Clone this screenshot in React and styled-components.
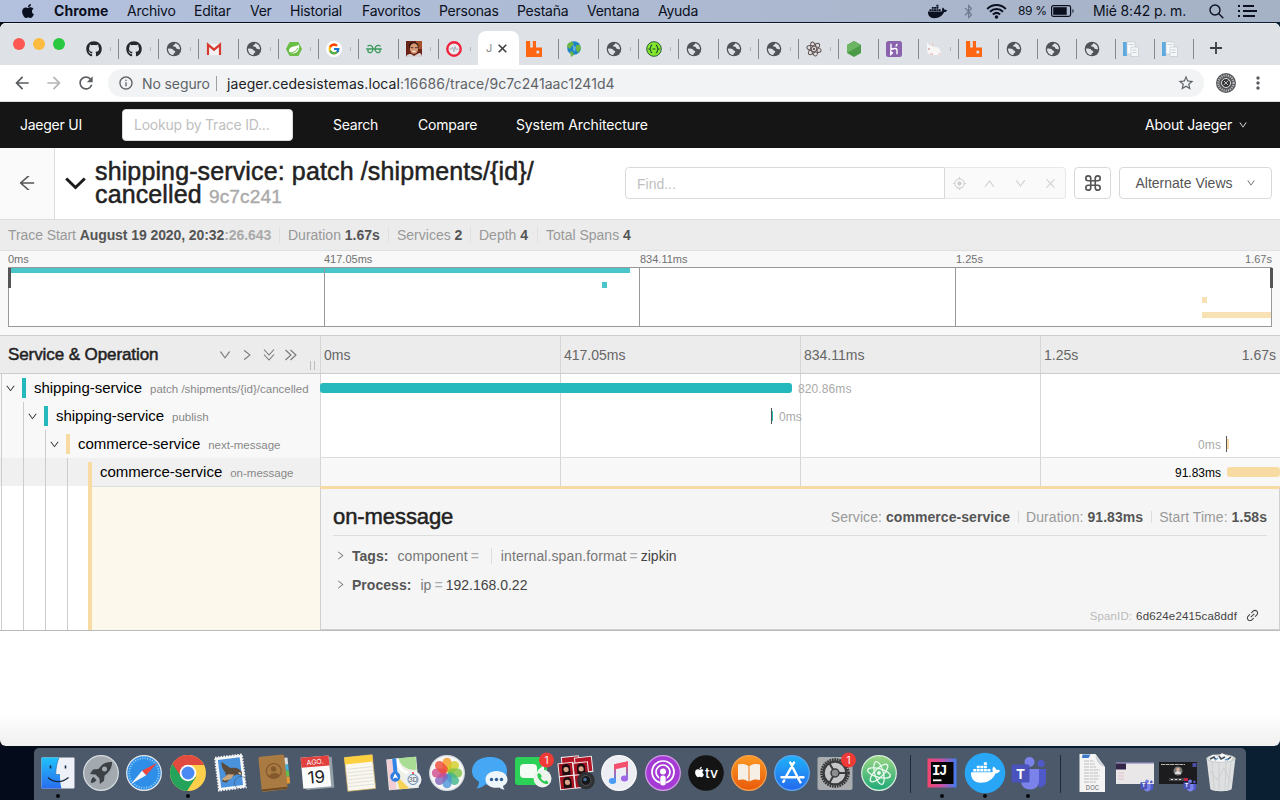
import React from "react";
import styled, { createGlobalStyle } from "styled-components";
import { FaApple, FaDocker, FaGithub, FaBluetoothB } from "react-icons/fa";
import { FcGoogle } from "react-icons/fc";
import {
  AiOutlineArrowLeft,
  AiOutlineDown,
  AiOutlineUp,
  AiOutlineClose,
  AiOutlineRight,
  AiOutlineLink,
} from "react-icons/ai";
import { MdArrowBack, MdArrowForward, MdRefresh, MdInfoOutline, MdStarBorder, MdMoreVert } from "react-icons/md";

const sf = `Inter, "Liberation Sans", sans-serif`;
const helv = `"Liberation Sans", Arial, sans-serif`;
const TEAL = "#25b9be";
const SAND = "#f7dba3";

const Global = createGlobalStyle`
  * { box-sizing: border-box; }
  body { margin: 0; overflow: hidden; background: #06121f; }
  svg { display: block; flex: none; }
`;

const Screen = styled.div`
  width: 1280px;
  height: 800px;
  display: flex;
  flex-direction: column;
  overflow: hidden;
  background: linear-gradient(90deg, #040b1a, #0a2032);
  font-family: ${helv};
`;

/* ---------- system menu bar ---------- */
const MenuBar = styled.header`
  height: 22px;
  margin-bottom: 1px;
  flex: none;
  display: flex;
  align-items: center;
  background: linear-gradient(90deg, #b3c1df, #adbad2 50%, #a5b2c5);
  color: #0a1020;
  font: 400 14px/22px ${sf};
`;
const AppleSlot = styled.div`
  width: 54px;
  padding-left: 20px;
`;
const MenuItem = styled.span`
  width: ${(p) => p.$w}px;
  flex: none;
  white-space: nowrap;
  font-weight: ${(p) => (p.$bold ? 700 : 400)};
  letter-spacing: ${(p) => (p.$bold ? 0.05 : -0.25)}px;
`;
const MenuStatus = styled.div`
  margin-left: auto;
  width: 352px;
  display: flex;
  align-items: center;
`;
const Slot = styled.div`
  width: ${(p) => p.$w}px;
  flex: none;
  display: flex;
  align-items: center;
  white-space: nowrap;
  font-size: ${(p) => p.$fs || 14}px;
  letter-spacing: ${(p) => p.$ls || 0}px;
  opacity: ${(p) => p.$o || 1};
`;

/* ---------- browser window ---------- */
const Window = styled.div`
  height: 723px;
  flex: none;
  display: flex;
  flex-direction: column;
  border-radius: 6px;
  overflow: hidden;
  background: linear-gradient(#fff 0 690px, #f0f0f0 723px);
`;
const TabStrip = styled.div`
  height: 42px;
  flex: none;
  display: flex;
  align-items: flex-end;
  background: #dee1e6;
  border-top: 1px solid #e9ebee;
`;
const Lights = styled.div`
  width: 79px;
  height: 34px;
  padding: 7px 0 0 13px;
  display: flex;
  gap: 8px;
`;
const Light = styled.i`
  width: 12px;
  height: 12px;
  border-radius: 50%;
  background: ${(p) => p.$c};
`;
const Tab = styled.div`
  width: ${(p) => p.$w || 40}px;
  height: 34px;
  flex: none;
  display: flex;
  align-items: center;
  padding-left: 7px;
  padding-top: 1px;
`;
const Sliver = styled.i`
  width: 1px;
  height: 4px;
  margin-left: 8px;
  background: #b3b6bb;
`;
const TabEnd = styled.i`
  width: 1px;
  height: 20px;
  margin-left: auto;
  background: ${(p) => (p.$hide ? "transparent" : "#85888c")};
`;
const ActiveTab = styled.div`
  width: 41px;
  height: 34px;
  flex: none;
  display: flex;
  align-items: center;
  gap: 6px;
  padding: 0 0 0 8px;
  background: #fff;
  border-radius: 8px 8px 0 0;
  color: #8a8a8a;
  font: 11px ${sf};
`;
const Plus = styled.div`
  height: 34px;
  display: flex;
  align-items: center;
  padding-left: 16px;
`;
const Toolbar = styled.div`
  height: 37px;
  flex: none;
  display: flex;
  align-items: center;
  background: #fff;
  border-bottom: 1px solid #d9dcdf;
  color: #5a5d61;
  padding-left: 12px;
`;
const Omnibox = styled.div`
  width: 1096px;
  height: 28px;
  display: flex;
  align-items: center;
  border-radius: 14px;
  background: #f1f3f4;
  padding: 0 9px 0 10px;
  font: 14px ${sf};
  color: #5f6368;
`;
const Insecure = styled.span`
  width: 75px;
  margin-left: 8px;
  border-right: 1px solid #9aa0a6;
  line-height: 15px;
  letter-spacing: -0.1px;
`;
const Url = styled.span`
  margin-left: 10px;
  letter-spacing: 0.08px;
  b {
    font-weight: 400;
    color: #202124;
  }
`;
const Push = styled.div`
  margin-left: auto;
`;
const Avatar = styled.div`
  margin: 0 12px;
`;

/* ---------- Jaeger navigation ---------- */
const Nav = styled.nav`
  height: 46px;
  flex: none;
  display: flex;
  align-items: center;
  background: #151515;
  color: #fff;
  font: 14px ${sf};
  padding-left: 20px;
  padding-bottom: 1px;
`;
const NavItem = styled.span`
  width: ${(p) => p.$w}px;
  white-space: nowrap;
  letter-spacing: ${(p) => p.$ls || 0}px;
`;
const Lookup = styled.div`
  width: 171px;
  height: 32px;
  margin-right: 40px;
  padding-left: 11px;
  border: 1px solid #d9d9d9;
  border-radius: 4px;
  background: #fff;
  color: #bfbfbf;
  line-height: 30px;
  letter-spacing: -0.22px;
`;
const About = styled.span`
  margin-left: auto;
  width: 135px;
  display: flex;
  align-items: center;
  gap: 6px;
  letter-spacing: -0.2px;
`;

/* ---------- trace header ---------- */
const TraceHead = styled.section`
  height: 71px;
  flex: none;
  display: flex;
  align-items: center;
  padding-bottom: 1px;
  background: #fff;
`;
const Back = styled.div`
  width: 55px;
  height: 71px;
  display: flex;
  align-items: center;
  justify-content: center;
  background: #fafafa;
  border-right: 1px solid #ddd;
  color: #555;
`;
const BigChevron = styled.div`
  width: 40px;
  padding-left: 10px;
`;
const Title = styled.h1`
  width: 530px;
  margin: 0;
  padding-bottom: 1px;
  font: 400 25px/23px ${helv};
  letter-spacing: 0.13px;
  color: #222;
  -webkit-text-stroke: 0.5px #222;
  small {
    font-size: 19px;
    letter-spacing: 0.2px;
    line-height: 19px;
    font-weight: 400;
    color: #aaa;
    -webkit-text-stroke: 0.4px #aaa;
  }
`;
const Find = styled.div`
  width: 320px;
  height: 32px;
  padding-left: 11px;
  border: 1px solid #d9d9d9;
  border-radius: 4px 0 0 4px;
  color: #bfbfbf;
  font: 14px/32px ${helv};
`;
const FindTools = styled.div`
  width: 121px;
  height: 32px;
  margin-right: 8px;
  padding: 0 8px;
  display: flex;
  align-items: center;
  justify-content: space-between;
  border: 1px solid #e8e8e8;
  border-left: 0;
  border-radius: 0 4px 4px 0;
  background: #fafafa;
  color: #cfcfcf;
`;
const Button = styled.div`
  width: ${(p) => p.$w}px;
  height: 32px;
  margin-right: 8px;
  display: flex;
  align-items: center;
  justify-content: center;
  gap: 13px;
  border: 1px solid #d9d9d9;
  border-radius: 4px;
  color: #555;
  font: 14px ${helv};
  white-space: nowrap;
`;
const Summary = styled.section`
  height: 32px;
  flex: none;
  display: flex;
  align-items: center;
  padding-left: 8px;
  background: #ececec;
  border-top: 1px solid #ddd;
  border-bottom: 1px solid #e0e0e0;
  font: 14px ${helv};
  color: #999;
  b {
    color: #555;
  }
  b i {
    font-style: normal;
    color: #aaa;
  }
`;
const SummaryItem = styled.span`
  width: ${(p) => p.$w}px;
  margin-right: 8px;
  white-space: nowrap;
  letter-spacing: ${(p) => p.$ls || 0}px;
  border-right: ${(p) => (p.$last ? 0 : "1px solid #e0e0e0")};
`;

/* ---------- minimap ---------- */
const MiniMap = styled.section`
  height: 85px;
  flex: none;
  background: #f8f8f8;
  border-bottom: 1px solid #ccc;
`;
const MiniTicks = styled.div`
  height: 16px;
  display: flex;
  padding: 0 8px;
  font: 11px/16px ${helv};
  color: #717171;
  span {
    width: 316px;
    flex: none;
  }
  span:nth-last-child(2) {
    flex: 1;
  }
  span:last-child {
    width: auto;
  }
`;

/* ---------- timeline ---------- */
const Row = styled.div`
  display: flex;
  flex: none;
  height: ${(p) => p.$h || 28}px;
`;
const HeadRow = styled(Row)`
  background: #ececec;
  border-bottom: 1px solid #ccc;
`;
const HeadName = styled.div`
  width: 320px;
  padding-left: 8px;
  display: flex;
  align-items: center;
  color: #222;
  font: 400 17px ${helv};
  -webkit-text-stroke: 0.5px #222;
  letter-spacing: -0.09px;
`;
const HeadTools = styled.div`
  margin-left: auto;
  display: flex;
  align-items: center;
  gap: 8px;
  color: #777;
`;
const Grip = styled.i`
  width: 5px;
  height: 9px;
  margin: 22px 5px 0 12px;
  border: solid #bbb;
  border-width: 0 1px;
`;
const Track = styled.div`
  width: 960px;
  display: flex;
  align-items: center;
  justify-content: ${(p) => (p.$end ? "flex-end" : "flex-start")};
  background: linear-gradient(90deg, #d6d6d6 1px, transparent 1px) 0 0 / 240px 100% ${(p) => p.$bg || "#fff"};
  box-shadow: ${(p) => (p.$line ? "0 -1px #ddd" : "none")};
`;
const Tick = styled.span`
  flex: 1;
  padding-left: 4px;
  display: flex;
  justify-content: space-between;
  padding-right: 4px;
  font: 14px ${helv};
  color: #666;
`;
const NameCol = styled.div`
  width: 320px;
  display: flex;
  background: ${(p) => p.$bg || "#f8f8f8"};
`;
const Guide = styled.span`
  width: 22px;
  flex: none;
  display: flex;
  align-items: center;
  padding-left: 5px;
  color: #333;
  background: linear-gradient(90deg, transparent 1px, #ccc 1px 2px, transparent 2px);
`;
const Stripe = styled.i`
  width: 4px;
  flex: none;
  margin: ${(p) => p.$m || "4px 8px 4px 0"};
  background: ${(p) => p.$c};
`;
const Service = styled.span`
  font: 15px/28px ${helv};
  letter-spacing: -0.02px;
  color: #000;
  white-space: nowrap;
`;
const Operation = styled.span`
  margin-left: 8px;
  font: 11.5px/30px ${helv};
  color: #888;
  white-space: nowrap;
`;
const Bar = styled.i`
  width: ${(p) => p.$w}px;
  height: 10px;
  border-radius: ${(p) => (p.$w > 10 ? 3 : 0)}px;
  background: ${(p) => p.$c};
`;
const Mark = styled.i`
  width: 1px;
  height: 16px;
  margin-left: ${(p) => p.$x || 0}px;
  background: #555;
`;
const Time = styled.span`
  margin: 1px ${(p) => p.$r || 0}px 0 6px;
  font: 12px ${helv};
  letter-spacing: ${(p) => (p.$dark ? 0 : 0.1)}px;
  color: ${(p) => (p.$dark ? "#000" : "#aaa")};
`;
const DetailGap = styled.div`
  flex: 1;
  background: #fdf8ec;
  border-top: 1px solid #ddd;
`;
const Detail = styled.div`
  width: 960px;
  height: 144px;
  padding: 0 12px;
  border: 1px solid #d0d0d0;
  border-top: 3px solid ${SAND};
  background: #f5f5f5;
`;
const DetailHead = styled.div`
  height: 47px;
  display: flex;
  align-items: center;
  justify-content: space-between;
  padding-top: 10px;
  border-bottom: 1px solid #ddd;
  h2 {
    margin: 0;
    font: 400 22px ${helv};
    color: #222;
    -webkit-text-stroke: 0.5px #222;
    letter-spacing: -0.08px;
  }
`;
const Facts = styled.div`
  display: flex;
  font: 14px/16px ${helv};
  letter-spacing: 0.07px;
  color: #999;
  b {
    color: #555;
  }
  span + span {
    margin-left: 8px;
    padding-left: 8px;
    background: linear-gradient(#ddd, #ddd) 0 2px / 1px 12px no-repeat;
  }
`;
const Accordion = styled.div`
  height: 29px;
  padding-left: 2px;
  display: flex;
  align-items: center;
  font: 14px ${helv};
  color: #777;
  b {
    margin: 0 9px 0 6px;
    color: #555;
    letter-spacing: 0.03px;
  }
  em {
    font-style: normal;
    color: #444;
  }
  q {
    quotes: none;
    margin: 0 3px;
    color: #aaa;
  }
`;
const TagKey = styled.span`
  letter-spacing: 0.1px;
`;
const Divider = styled.i`
  width: 1px;
  height: 16px;
  margin: 0 9px 0 9px;
  background: #ddd;
`;
const Accordions = styled.div`
  padding-top: 5px;
  height: 70px;
`;
const SpanId = styled.div`
  display: flex;
  align-items: center;
  justify-content: flex-end;
  padding: 2px 7px 0 0;
  font: 11.5px/14px ${helv};
  letter-spacing: 0.1px;
  color: #bbb;
  b {
    margin: 0 8px 0 4px;
    font-weight: 400;
    letter-spacing: 0.15px;
    color: #444;
  }
`;
const TableEnd = styled.div`
  height: 1px;
  flex: none;
  background: #bbb;
`;

/* ---------- dock ---------- */
const Dock = styled.footer`
  width: 1212px;
  height: 52px;
  margin: 2px 0 0 34px;
  padding-left: 2.4px;
  display: flex;
  background: #4c596a;
  border-radius: 5px 5px 0 0;
`;
const DockSlot = styled.div`
  width: 43.2px;
  height: 52px;
  flex: none;
  display: flex;
  flex-direction: column;
  align-items: center;
  padding-top: 4.5px;
  svg {
    overflow: visible;
  }
`;
const Dot = styled.i`
  width: 4px;
  height: 4px;
  margin-top: 1.5px;
  border-radius: 50%;
  background: #080a0e;
`;
const DockRule = styled.i`
  width: 1px;
  height: 38px;
  margin: 7px 9px 0 10.3px;
  background: #1d2b3b;
`;

/* ---------- favicons ---------- */
const Ico = ({ children, s = 16, v = 16 }) => (
  <svg width={s} height={s} viewBox={`0 0 ${v} ${v}`} fill="none">
    {children}
  </svg>
);
const Globe = () => (
  <Ico>
    <circle cx="8" cy="8" r="7.3" fill="#505357" />
    <path d="M9.2 2.3C12 2.8 14 5.3 14 8.2c-1 .3-2.6.2-3.5-.6-.6-.5-.3-1.4-1-1.700-.9-.3-2 .1-2.400-.8-.3-.8 1-1 1.500-1.500.3-.4.2-.9.6-1.300z" fill="#dee1e6" />
    <path d="M2 7.700c1.500-.3 3.300-.3 4.500.4.9.5.5 1.200 1.300 1.500.9.3 1.600.6 1.500 1.400-.1.9-1.400.9-1.700 1.700-.2.5 0 .9-.2 1.300C4.300 13.900 2 11.200 2 7.700z" fill="#dee1e6" />
  </Ico>
);
const Gmail = () => (
  <Ico>
    <path d="M1.5 3h13v11h-13z" fill="#f2f2f2" />
    <path d="M2 14V3.7l6 5 6-5V14" stroke="#d63b31" strokeWidth="2.2" />
  </Ico>
);
const Spring = () => (
  <Ico>
    <path d="M.5 8 3.8 1.5h8.4L15.5 8l-3.3 6.5H3.8z" fill="#6abd45" stroke="#6abd45" strokeLinejoin="round" />
    <path d="M13 3.5C11 6 3.500 4.500 3 9.500c0 3 4 3.500 6.500 2.500C13 10.300 13.600 6.500 13 3.500z" fill="#fff" />
    <path d="M4 12c4-.5 6.500-2 8-5" stroke="#6abd45" />
  </Ico>
);
const GoogleTab = () => (
  <Ico>
    <circle cx="8" cy="8" r="8" fill="#fff" />
    <FcGoogle x="1.5" y="1.5" size="13" />
  </Ico>
);
const Geeks = () => (
  <Ico>
    <path d="M1.500 5.200C3.500 3.600 7 4.500 7 8s-3.200 4.500-5 2.700V8.200M.2 8H15.800M14.500 5.200C12.500 3.600 9 4.500 9 8s3.200 4.500 5 2.700V8.200" stroke="#3a9a5c" strokeWidth="1.300" />
  </Ico>
);
const Face = () => (
  <Ico>
    <path d="M0 0h16v16H0z" fill="#6b2418" />
    <path d="M10 0h6v8h-6z" fill="#a5502a" />
    <path d="M3 5C3 0 12.500 0 12.500 5v4l-9-1z" fill="#2a1510" />
    <ellipse cx="8" cy="7.500" rx="4.200" ry="5.200" fill="#d79a75" />
    <path d="M4.500 6.700h3M9 6.700h3" stroke="#54342a" />
    <path d="M0 16c1-3 3-3 5-3l3 2 5-3c2 0 3 2 3 4z" fill="#d9d5d6" />
    <path d="m6.500 10.200 3 .2" stroke="#fff" />
  </Ico>
);
const Jenkins = () => (
  <Ico>
    <circle cx="8" cy="8" r="6.700" fill="#e9ebef" stroke="#f0233c" strokeWidth="2.400" />
    <path d="M3.500 8h2l1-2 1.300 4.500 1.200-5 1.300 3.500.8-1h1.500" stroke="#aab2bc" />
  </Ico>
);
const Rabbit = () => (
  <Ico>
    <path d="M0 0h4.200v6.500h2.600V0H10v6.500h6V16H0zM10.500 9.800V12.500h2.700V9.800z" fill="#ff6612" fillRule="evenodd" />
  </Ico>
);
const Earth = () => (
  <Ico>
    <circle cx="8" cy="7" r="6.800" fill="#1c84c6" />
    <path d="M1 6C1 2 4 1 6 .8L8 3 6 5 4 8zM10 4l4 0 1 4-3 4-2-3zM4 10l3 1 1 3-3 2z" fill="#6bb544" />
    <path d="M7 4l3 2-1 5-2-2z" fill="#a8dcee" opacity=".5" />
  </Ico>
);
const Swagger = () => (
  <Ico>
    <circle cx="8" cy="8" r="7.300" fill="#85ea2d" stroke="#2a5a3a" strokeWidth="1" />
    <path d="M6.200 4.200C3.800 4.200 5.500 7.400 3.500 8c2 .6.300 3.800 2.700 3.800M9.800 4.200c2.400 0 .7 3.200 2.700 3.800-2 .6-.3 3.800-2.700 3.800M6.500 8h3" stroke="#24492c" strokeWidth="1.200" />
  </Ico>
);
const AtomMark = ({ c = "#5c4c49" }) => (
  <g stroke={c} fill="none">
    <ellipse cx="8" cy="8" rx="7.300" ry="2.700" transform="rotate(15 8 8)" />
    <ellipse cx="8" cy="8" rx="7.300" ry="2.700" transform="rotate(75 8 8)" />
    <ellipse cx="8" cy="8" rx="7.300" ry="2.700" transform="rotate(135 8 8)" />
    <circle cx="8" cy="8" r=".8" fill={c} />
  </g>
);
const Atom = () => (
  <Ico>
    <AtomMark />
  </Ico>
);
const Node = () => (
  <Ico>
    <path d="M8 0 15 4v8l-7 4-7-4V4z" fill="#4a9a47" />
    <path d="M8 0 15 4 1 12V4z" fill="#6cb562" />
  </Ico>
);
const Heroku = () => (
  <Ico>
    <rect width="16" height="16" rx="2.500" fill="#8a62ad" />
    <path d="M5 2.800v5.700c3-1.400 6-1.500 6 .5v4.200M11 2.800c0 1.200-.6 2-1.300 2.600M4.800 10.500v3l1.600-1.500z" stroke="#fff" strokeWidth="1.400" />
  </Ico>
);
const Bunny = () => (
  <Ico>
    <path d="M1 1l3 4 3.500-3-.5 4c5-1 8 2 8 8H5L1.500 12 1 7z" fill="#f8f6f5" />
    <path d="M6 5l1.200-2.500M4 13h3M12.500 13h2" stroke="#e6a99e" />
    <circle cx="3" cy="8" r=".7" fill="#a55" />
  </Ico>
);
const Papers = () => (
  <Ico>
    <path d="M0 1h4v14H0z" fill="#5ea9dd" />
    <path d="M4 1h8v12H4z" fill="#f9fafb" stroke="#c4cacf" strokeWidth=".7" />
    <path d="M8 6h7.500v9.500H8z" fill="#f5f6f7" stroke="#c4cacf" strokeWidth=".7" />
    <path d="M5.500 3.500h5M9.500 9h4M9.500 11.500h4" stroke="#c8cfd6" />
  </Ico>
);

/* [icon, shows the edge of a clipped title] */
const leftTabs = [
  [<FaGithub size={16} color="#24292e" />, 1],
  [<FaGithub size={16} color="#24292e" />, 1],
  [<Globe />, 1],
  [<Gmail />],
  [<Globe />, 1],
  [<Spring />, 1],
  [<GoogleTab />, 1],
  [<Geeks />],
  [<Face />, 1],
  [<Jenkins />, 1],
];
/* [icon, width, clipped title] */
const rightTabs = [
  [<Rabbit />, 40], [<Earth />, 40], [<Globe />, 40, 1], [<Swagger />, 40, 1], [<Globe />, 40], [<Globe />, 40, 1],
  [<Globe />, 40, 1], [<Atom />, 40, 1], [<Node />, 40], [<Heroku />, 40], [<Bunny />, 40, 1], [<Rabbit />, 40],
  [<Globe />, 39], [<Globe />, 39], [<Globe />, 39], [<Papers />, 39], [<Papers />, 39],
];

/* ---------- dock drawings ---------- */
const D = ({ children }) => (
  <svg width="38" height="40" viewBox="0 0 38 40" fill="none">
    {children}
  </svg>
);
const Disc = ({ fill, stroke = "#d8dde2" }) => (
  <circle cx="19" cy="20" r="17.300" fill={fill} stroke={stroke} strokeWidth="1.200" />
);
const Badge = () => (
  <g>
    <circle cx="32.500" cy="7" r="7.500" fill="#f03a36" />
    <text x="32.500" y="10.600" fontSize="10" fill="#fff" textAnchor="middle" fontFamily="Inter">1</text>
  </g>
);
const Finder = () => (
  <D>
    <rect x="2.500" y="4.500" width="33" height="31" rx="1" fill="#eef2f8" />
    <path d="M2.500 4.500H20c-2 5-3.200 11-3.300 17H21c0 5 .3 9.500 1.500 14h-20z" fill="url(#fnd)" />
    <path d="M11.500 12.500v3M26.500 12.500v3" stroke="#16283c" strokeWidth="1.600" />
    <path d="M9 24.500c6 5.500 14 5.500 20.500 0" stroke="#16283c" strokeWidth="1.300" />
    <path d="M20 4.500c-2 5-3.200 11-3.300 17H21" stroke="#2467a8" strokeWidth=".6" />
    <defs>
      <linearGradient id="fnd" x2="0" y2="1"><stop stopColor="#1fc2fa" /><stop offset="1" stopColor="#2a6df0" /></linearGradient>
    </defs>
  </D>
);
const Launchpad = () => (
  <D>
    <Disc fill="#a2a9af" />
    <path d="M30 9c-6-.5-10 2-13.500 7l-5.500.6-3 4.400 5.500.4 4 4 .3 5.600 4.200-3.200.6-5.300C27.500 19 30 15 30 9z" fill="#3c4146" />
    <path d="M11.500 24c-2 1-2.500 3.500-2.800 6 2.500-.3 4.800-1 5.800-3z" fill="#3c4146" />
    <circle cx="22.500" cy="16" r="2.500" fill="#a2a9af" />
  </D>
);
const Safari = () => (
  <D>
    <Disc fill="#2f8fe8" stroke="#e6eaee" />
    <circle cx="19" cy="20" r="14.800" stroke="#8fd0f8" strokeWidth="1.800" strokeDasharray="1 1.500" />
    <path d="M32 10 21.200 22.200 17 17.800z" fill="#f2443a" />
    <path d="M6 31 17 17.800l4.200 4.400z" fill="#f4f4f4" />
  </D>
);
const Chrome = () => (
  <D>
    <circle cx="19" cy="20" r="18" fill="#fcd04b" />
    <path d="M19 20 3.400 11A18 18 0 0 0 18 38l9-14z" fill="#24a45b" />
    <path d="M3.400 11A18 18 0 0 1 35 12H19l-8 10z" fill="#e04a3f" />
    <circle cx="19" cy="20" r="8.300" fill="#fff" />
    <circle cx="19" cy="20" r="6.500" fill="#4a8af4" />
  </D>
);
const Mail = () => (
  <D>
    <g transform="rotate(-7 19 20)">
      <rect x="5" y="3" width="27" height="33" fill="#f5f6f7" stroke="#f5f6f7" strokeWidth="2" strokeDasharray="1.600 1.200" />
      <rect x="7.500" y="5.500" width="22" height="28" fill="#4a92dc" />
      <path d="M11 8c2 2 5 4 8 7 5 0 9 1 11 6l-1 3-4-2-6 2-6 5-4-2 5-5-1-4c-2-3-3-6-2-10z" fill="#5a4a3c" />
      <path d="M9 25l7-4 6 1-4 4-6 1z" fill="#c9a77c" />
      <path d="M26 20l3 1-1 2z" fill="#f1e5c0" />
    </g>
    <circle cx="29" cy="30" r="6.500" stroke="#34465e" strokeWidth="1" opacity=".5" />
  </D>
);
const Contacts = () => (
  <D>
    <g transform="rotate(-6 19 20)">
      <path d="M29 6h5v7h-5z" fill="#d8dde0" /><path d="M29 13h5v6h-5z" fill="#44b1d8" />
      <path d="M29 19h5v6h-5z" fill="#62c04b" /><path d="M29 25h5v7h-5z" fill="#e79a34" />
      <rect x="5" y="2.500" width="26" height="35" rx="2" fill="#a97a42" />
      <path d="M5 36h26" stroke="#6d4a22" strokeWidth="2" />
      <circle cx="19" cy="18" r="7.500" stroke="#84592c" strokeWidth="1.200" />
      <circle cx="19" cy="16" r="2.800" fill="#84592c" />
      <path d="M13.500 23c1-4 10-4 11 0a7.500 7.500 0 0 1-11 0z" fill="#84592c" />
    </g>
  </D>
);
const Calendar = () => (
  <D>
    <g transform="rotate(-5 19 20)">
      <rect x="7" y="5" width="28" height="31" fill="#94a0a8" />
      <rect x="4" y="3.500" width="28" height="31" fill="#fbfbfb" />
      <rect x="4" y="3.500" width="28" height="10" fill="#e2403d" />
      <text x="18" y="11.300" fontSize="7" fill="#fff" textAnchor="middle" fontFamily="Inter">AGO.</text>
      <text x="18" y="30" fontSize="17" fill="#222" textAnchor="middle" fontFamily="Inter">19</text>
    </g>
  </D>
);
const Notes = () => (
  <D>
    <g transform="rotate(-6 19 20)">
      <rect x="5" y="3" width="28" height="34" fill="#f9f7ee" stroke="#c9a75b" strokeWidth=".7" />
      <rect x="5" y="3" width="28" height="7" fill="#fdd03f" />
      <path d="M5 15h28M5 18.500h28M5 22h28M5 25.500h28M5 29h28M5 32.500h28" stroke="#dcdcd8" strokeWidth=".8" />
    </g>
  </D>
);
const Maps = () => (
  <D>
    <g transform="rotate(-5 19 20)">
      <rect x="3.500" y="5" width="30" height="31" fill="#eef0e6" />
      <path d="M4 6h7v30H4z" fill="#f2c4cf" opacity=".8" />
      <path d="M16 5h17v13c-9 0-16-5-17-13z" fill="#a9dc94" />
      <path d="M14 5c1 14 9 17 19 17" stroke="#fff" strokeWidth="3" />
      <path d="M12 22l12 14H14z" fill="#f7d259" />
      <path d="M11.500 5v19" stroke="#2f86e8" strokeWidth="4" />
      <circle cx="11" cy="23" r="5" fill="#2f7de0" />
      <path d="m11 19.500 2.800 5.500L11 23.800 8.200 25z" fill="#fff" />
    </g>
    <circle cx="29" cy="26.500" r="8.500" fill="#eef1f3" />
    <circle cx="29" cy="26.500" r="5" stroke="#5f8cac" />
    <text x="29" y="29" fontSize="6.500" fill="#456" textAnchor="middle" fontFamily="Inter">3D</text>
    <circle cx="29" cy="20" r="1" fill="#e33" />
  </D>
);
const petals = ["#f79a1e", "#cfce26", "#7fc241", "#3fb58a", "#4a94d8", "#8565bd", "#d04a8c", "#ee4a38"];
const Photos = () => (
  <D>
    <Disc fill="#f7f7f5" />
    {petals.map((c, i) => (
      <rect key={c} x="14.500" y="4.800" width="9" height="14.500" rx="4.500" fill={c} opacity=".8" transform={`rotate(${i * 45} 19 20)`} />
    ))}
  </D>
);
const Messages = () => (
  <D>
    <path d="M19 4C9 4 1 9.500 1 18c0 5 3 8.500 7 10.500 0 3-1 5-2.500 7 4-.5 7-2 8.500-4 12 2 22-3 22-13.500C36 9.500 29 4 19 4z" fill="#46a8f5" />
    <path d="M25.500 18c-6 0-11 3.500-11 8.500 0 6 6.500 9.500 14 8 1.500 1.500 3.500 2 5 2-1-1.200-1.500-2.300-1.500-3.500 3-1.500 4.500-3.600 4.500-6.500 0-5-5-8.500-11-8.500z" fill="#eef5fb" />
    <circle cx="20.500" cy="26.500" r="1.700" fill="#2d5f96" /><circle cx="25.500" cy="26.500" r="1.700" fill="#2d5f96" /><circle cx="30.500" cy="26.500" r="1.700" fill="#2d5f96" />
  </D>
);
const Facetime = () => (
  <D>
    <rect x="1" y="4" width="32" height="28" rx="3" fill="#2bd257" />
    <rect x="6" y="11" width="17" height="14" rx="4" fill="#f4fbf5" />
    <path d="m24 17 6-5v12l-6-4z" fill="#f4fbf5" />
    <circle cx="28.500" cy="25.500" r="9" fill="#eef3ee" />
    <path d="M24 20.500c-1.500 1.500 0 5 2.500 7.500s6 4 7.500 2.500c1-1-.5-2.500-2-3l-1.500 1c-1.500-.7-3-2-3.700-3.700l1-1.500c-.5-1.800-2.500-4-3.800-2.800z" fill="#2bc950" />
    <Badge />
  </D>
);
const PhotoBooth = () => (
  <D>
    <g transform="rotate(-6 19 20)">
      {[[6, 3], [19, 5]].map(([x, y]) => <rect key={x} x={x} y={y} width="17" height="15" fill="#b51524" stroke="#eee" />)}
      {[[2, 9], [17, 10], [2, 22], [17, 22]].map(([x, y]) => (
        <g key={x + "-" + y}>
          <rect x={x} y={y} width="14.500" height="13" fill="#a81322" stroke="#eee" />
          <path d={`M${x + 3.5} ${y + 12}V${y + 5}a4 4 0 0 1 8 0v7z`} fill="#1c0c10" />
          <circle cx={x + 7.5} cy={y + 6.5} r="2.600" fill="#dba58b" />
        </g>
      ))}
    </g>
    <circle cx="29" cy="27.500" r="8.800" fill="#2f3134" />
    <circle cx="29" cy="27.500" r="5" fill="#15171b" stroke="#555" />
    <circle cx="28" cy="26.500" r="1.800" fill="#4b6ea0" />
  </D>
);
const Music = () => (
  <D>
    <Disc fill="#eceef3" stroke="#fafafa" />
    <path d="M15 28V12l12-2.500V25" stroke="url(#mus)" strokeWidth="2" /><path d="M14 11.500 28 8.500v5L14 16.500z" fill="#f4506e" />
    <ellipse cx="12.500" cy="28" rx="3.600" ry="3" fill="#4a9cf5" /><ellipse cx="24.500" cy="25.500" rx="3.600" ry="3" fill="#a066e8" />
    <defs><linearGradient id="mus" x2="0" y2="1"><stop stopColor="#f4506e" /><stop offset="1" stopColor="#5a86f2" /></linearGradient></defs>
  </D>
);
const Podcasts = () => (
  <D>
    <Disc fill="#a53bd4" stroke="#d39be8" />
    <circle cx="19" cy="19" r="11" stroke="#fff" strokeWidth="1.700" /><circle cx="19" cy="19" r="7" stroke="#fff" strokeWidth="1.700" />
    <path d="M14.500 21h9l-2 11h-5z" fill="#a53bd4" />
    <circle cx="19" cy="18.500" r="3" fill="#fff" /><rect x="16.300" y="22.500" width="5.400" height="10" rx="2.500" fill="#fff" />
  </D>
);
const AppleTv = () => (
  <D>
    <circle cx="19" cy="20" r="17.800" fill="#141415" />
    <FaApple x="6.500" y="13" size="12" color="#fff" />
    <text x="18" y="24.500" fontSize="14" fontWeight="500" fill="#fff" fontFamily="Inter">tv</text>
  </D>
);
const Books = () => (
  <D>
    <Disc fill="url(#bks)" stroke="#f6a24c" />
    <path d="M18.500 13c-3-2.500-7.500-2.500-10.500-1.500v15.500c3-1 7.500-1 10.500 1.500zM19.500 13c3-2.500 7.500-2.500 10.500-1.500v15.500c-3-1-7.500-1-10.500 1.500z" fill="#f6efe6" />
    <defs><linearGradient id="bks" x2="0" y2="1"><stop stopColor="#fb9a24" /><stop offset="1" stopColor="#e9590c" /></linearGradient></defs>
  </D>
);
const AppStore = () => (
  <D>
    <Disc fill="url(#aps)" stroke="#5aa6f0" />
    <path d="M17.200 9.500 26 27M21 9.500 12.500 24.500M8.500 24.300h14M27 24.300h3.500M11.200 27.500l-.9 1.300M26.800 28.300l.6 1" stroke="#fff" strokeWidth="2.400" strokeLinecap="round" />
    <defs><linearGradient id="aps" x2="0" y2="1"><stop stopColor="#1fb2f8" /><stop offset="1" stopColor="#2469ee" /></linearGradient></defs>
  </D>
);
const Prefs = () => (
  <D>
    <rect x="1.500" y="4" width="35" height="33" rx="2" fill="#a9adaf" />
    <circle cx="19" cy="20" r="13.500" fill="#c4c6c7" stroke="#333" strokeWidth="2.500" strokeDasharray="1.700 .8" />
    <circle cx="19" cy="20" r="11.500" stroke="#3a3b3c" strokeWidth="2.500" />
    <circle cx="19" cy="20" r="4" fill="#8c8f90" stroke="#3a3b3c" strokeWidth="1.500" />
    <path d="M23 20h8M17 16.500l-4-7M17 23.500l-4 7" stroke="#3a3b3c" strokeWidth="2" />
    <Badge />
  </D>
);
const AtomApp = () => (
  <D>
    <Disc fill="url(#atm)" stroke="#d5efdc" />
    <g transform="translate(6.200 7.200) scale(1.600)" strokeWidth=".8"><AtomMark c="#eafaf0" /></g>
    <defs><linearGradient id="atm" x2="0" y2="1"><stop stopColor="#9bd683" /><stop offset="1" stopColor="#1fa978" /></linearGradient></defs>
  </D>
);
const IntelliJ = () => (
  <D>
    <rect x="4.500" y="5.500" width="29" height="29" fill="url(#ij)" />
    <rect x="8" y="9" width="22.500" height="22" fill="#050505" />
    <text x="9" y="21.500" fontSize="14" fontWeight="700" fill="#fff" fontFamily="Liberation Mono" letterSpacing="-1.300">IJ</text>
    <path d="M10 27.300h8.500" stroke="#fff" strokeWidth="1.800" />
    <defs><linearGradient id="ij"><stop stopColor="#f2456d" /><stop offset=".45" stopColor="#cf4ea0" /><stop offset="1" stopColor="#3d7df2" /></linearGradient></defs>
  </D>
);
const DockerApp = () => (
  <D>
    <circle cx="19" cy="20" r="20.300" fill="#2aa6f7" />
    <FaDocker x="5" y="5" size="29" color="#fff" />
  </D>
);
const TeamsMark = () => (
  <g>
    <circle cx="32" cy="10.500" r="3.500" fill="#5059c9" /><path d="M26 16h11v11c0 5-3 7.500-7 7.500z" fill="#5059c9" />
    <circle cx="20.500" cy="9" r="5" fill="#7b83eb" /><path d="M12 16h18v12c0 5-4 8.500-9 8.500S12 33 12 28z" fill="#7b83eb" />
    <rect x="2.500" y="11.500" width="18" height="18" rx="1.500" fill="#4a52bb" />
    <text x="11.500" y="25.500" fontSize="13.500" fontWeight="700" fill="#fff" textAnchor="middle" fontFamily="Inter">T</text>
  </g>
);
const Teams = () => (
  <D>
    <TeamsMark />
  </D>
);
const Doc = () => (
  <D>
    <path d="M6.500 1h16l9.500 13v25H6.500z" fill="#f4f4f4" />
    <path d="M22.500 1c.5 6 1 10 9.500 13z" fill="#cfd4d8" />
    <path d="M9.500 1.500h8l-2 3.500H9z" fill="#3c78c8" />
    <path d="M11 8h10M11 11h11M11 14h12M11 17h16M11 20h14M11 23h16M11 26h15M11 29h12" stroke="#b4b6b8" strokeWidth=".9" strokeDasharray="5 .8 3 .6" />
    <text x="19.500" y="37" fontSize="6" fill="#666" textAnchor="middle" fontFamily="Inter">DOC</text>
  </D>
);
const PreviewLight = () => (
  <D>
    <rect x="0" y="9" width="38" height="22" fill="#e9e7e8" />
    <path d="M0 9h38v1.500H0z" fill="#7c7aa8" /><path d="M0 10.500h10v6H0z" fill="#34264a" />
    <path d="M2 20h6M2 23h6M2 26h6" stroke="#e3b9c5" strokeWidth=".8" />
    <g transform="translate(23.500 25) scale(.37)"><TeamsMark /></g>
  </D>
);
const PreviewDark = () => (
  <D>
    <rect x="0" y="9" width="38" height="22" fill="#1c1b1d" />
    <path d="M2 11.500h24" stroke="#ccc" strokeWidth=".9" strokeDasharray="4 .6" /><path d="M33.500 10h4v4h-4z" fill="#4b4fa5" />
    <circle cx="19" cy="18" r="4.500" fill="#7f7d7b" /><circle cx="19" cy="16.500" r="1.700" fill="#e0b39a" /><path d="M16 21c0-4 6-4 6 0z" fill="#ddd" />
    <path d="M10 26.500h18" stroke="#49484b" strokeWidth="3" /><path d="M25 26.500h4" stroke="#c2254b" strokeWidth="3" /><path d="M12 26.500h2M16 26.500h2M20 26.500h2" stroke="#ddd" />
    <g transform="translate(23.500 25) scale(.37)"><TeamsMark /></g>
  </D>
);
const Trash = () => (
  <D>
    <path d="M4.500 5h29l-3.800 31c-2 3-19.400 3-21.400 0z" fill="#dddfe0" />
    <path d="M10 9l2 27M17 10v27M24 10l-1 27M29 9l-3 27M8 18l7 9 7-12 7 14" stroke="#c8cbcd" strokeWidth=".8" />
    <ellipse cx="19" cy="5.500" rx="14.500" ry="4.300" fill="#c9cccd" />
    <path d="M6 5.500l5-4 5 2 4-3.500 5 3 6 1-2 3.500-9 1.500-10-1z" fill="#f7f7f7" />
    <path d="m8 6 4-2 2 3M17 3l2 3 4-2M25 7l4-3" stroke="#3f4d58" strokeWidth="1.500" /><path d="m13 7 3-2M23 7l3-1" stroke="#5a9bd0" strokeWidth="1.500" />
  </D>
);

const dockApps = [
  [Finder, 1], [Launchpad], [Safari], [Chrome, 1], [Mail], [Contacts], [Calendar], [Notes], [Maps], [Photos],
  [Messages], [Facetime], [PhotoBooth], [Music], [Podcasts], [AppleTv], [Books], [AppStore], [Prefs], [AtomApp],
];
const dockRunning = [[IntelliJ, 1], [DockerApp, 1], [Teams, 1]];
const dockFiles = [[Doc], [PreviewLight], [PreviewDark], [Trash]];
const renderDock = (list) =>
  list.map(([Icon, on], i) => (
    <DockSlot key={i}>
      <Icon />
      {on && <Dot />}
    </DockSlot>
  ));

const menus = [
  ["Archivo", 67], ["Editar", 56], ["Ver", 40], ["Historial", 72], ["Favoritos", 77],
  ["Personas", 78], ["Pestaña", 70], ["Ventana", 71], ["Ayuda", 50],
];

const SpanName = ({ depth, color, service, operation, leaf, bg }) => (
  <NameCol $bg={bg}>
    {Array.from({ length: depth }, (_, i) => (
      <Guide key={i}>{i === depth - 1 && !leaf && <AiOutlineDown size={11} />}</Guide>
    ))}
    <Stripe $c={color} $m={leaf ? "4px 8px 0 0" : undefined} />
    <Service>{service}</Service>
    <Operation>{operation}</Operation>
  </NameCol>
);

export default function App() {
  return (
    <Screen>
      <Global />
      <MenuBar>
        <AppleSlot><FaApple size={16} /></AppleSlot>
        <MenuItem $w={73} $bold>Chrome</MenuItem>
        {menus.map(([t, w]) => <MenuItem key={t} $w={w}>{t}</MenuItem>)}
        <MenuStatus>
          <Slot $w={33}><FaDocker size={19} /></Slot>
          <Slot $w={25} $o={0.35}><FaBluetoothB size={15} /></Slot>
          <Slot $w={32}>
            <svg width="21" height="16" viewBox="0 0 21 16" fill="none" stroke="#0a1020" strokeWidth="2">
              <path d="M1.200 6C6.300.7 14.700.7 19.800 6M4 8.800c3.700-3.700 9.300-3.700 13 0M6.900 11.500c2.200-2 5-2 7.200 0" />
              <circle cx="10.500" cy="14" r=".8" fill="#0a1020" />
            </svg>
          </Slot>
          <Slot $w={33} $fs={12} $ls={-0.3}>89 %</Slot>
          <Slot $w={42}>
            <svg width="23" height="12" viewBox="0 0 23 12" fill="none">
              <rect x=".6" y=".6" width="19" height="10.800" rx="1.800" stroke="#0a1020" strokeWidth="1.200" />
              <path d="M2.200 2.200h13.500v7.600H2.200z" fill="#0a1020" />
              <path d="M21.500 4v4c.8-.4 1-1 1-2s-.2-1.600-1-2z" fill="#0a1020" />
            </svg>
          </Slot>
          <Slot $w={116} $ls={-0.15}>Mié 8:42 p. m.</Slot>
          <Slot $w={29}>
            <svg width="15" height="15" viewBox="0 0 15 15" fill="none" stroke="#0a1020" strokeWidth="1.400">
              <circle cx="6" cy="6" r="5" /><path d="m9.600 9.600 4.700 4.700" />
            </svg>
          </Slot>
          <Slot $w={20}>
            <svg width="19" height="12" viewBox="0 0 19 12" stroke="#0a1020" strokeWidth="1.800">
              <path d="M0 1h2M0 6h2M0 11h2M5 1h11M5 6h14M5 11h12" />
            </svg>
          </Slot>
        </MenuStatus>
      </MenuBar>

      <Window>
        <TabStrip>
          <Lights><Light $c="#fc5753" /><Light $c="#fdbc40" /><Light $c="#28c840" /></Lights>
          {leftTabs.map(([icon, clipped], i) => (
            <Tab key={i} $w={i === 9 ? 39 : 40}>{icon}{clipped && <Sliver />}<TabEnd $hide={i === 9} /></Tab>
          ))}
          <ActiveTab>
            J
            <svg width="9" height="9" viewBox="0 0 9 9" stroke="#3c4043" strokeWidth="1.600"><path d="m.7.7 7.600 7.600M8.300.7.7 8.300" /></svg>
          </ActiveTab>
          {rightTabs.map(([icon, w, clipped], i) => (
            <Tab key={i} $w={w}>{icon}{clipped && <Sliver />}<TabEnd /></Tab>
          ))}
          <Plus>
            <svg width="12" height="12" viewBox="0 0 12 12" stroke="#3c4043" strokeWidth="1.800"><path d="M6 0v12M0 6h12" /></svg>
          </Plus>
        </TabStrip>
        <Toolbar>
          <Slot $w={32}><MdArrowBack size={20} /></Slot>
          <Slot $w={32} $o={0.45}><MdArrowForward size={20} /></Slot>
          <Slot $w={32}><MdRefresh size={20} /></Slot>
          <Omnibox>
            <MdInfoOutline size={16} />
            <Insecure>No seguro</Insecure>
            <Url><b>jaeger.cedesistemas.local</b>:16686/trace/9c7c241aac1241d4</Url>
            <Push><MdStarBorder size={18} /></Push>
          </Omnibox>
          <Avatar>
            <svg width="20" height="20" viewBox="0 0 20 20" fill="none">
              <circle cx="10" cy="10" r="10" fill="#55575a" />
              <circle cx="10" cy="10" r="7.600" stroke="#b9babb" strokeWidth="2.200" strokeDasharray="1.200 1" />
              <circle cx="10" cy="10" r="4.500" fill="#303234" stroke="#ddd" />
              <path d="m7.500 12 5-4.500M8 8l4 4" stroke="#ccc" />
            </svg>
          </Avatar>
          <MdMoreVert size={20} />
        </Toolbar>

        <Nav>
          <NavItem $w={102} $ls={-0.25}>Jaeger UI</NavItem>
          <Lookup>Lookup by Trace ID...</Lookup>
          <NavItem $w={85} $ls={-0.25}>Search</NavItem>
          <NavItem $w={98} $ls={-0.2}>Compare</NavItem>
          <NavItem $w={140} $ls={-0.12}>System Architecture</NavItem>
          <About>About Jaeger <AiOutlineDown size={10} /></About>
        </Nav>

        <TraceHead>
          <Back><AiOutlineArrowLeft size={20} /></Back>
          <BigChevron>
            <svg width="21" height="13" viewBox="0 0 21 13" fill="none" stroke="#1c1c1c" strokeWidth="3"><path d="m1.200 1.500 9.300 9 9.300-9" /></svg>
          </BigChevron>
          <Title>
            shipping-service: patch /shipments/{"{id}"}/<br />cancelled <small>9c7c241</small>
          </Title>
          <Find>Find...</Find>
          <FindTools>
            <svg width="13" height="13" viewBox="0 0 12 12" fill="none" stroke="#cfcfcf">
              <circle cx="6" cy="6" r="4.300" /><circle cx="6" cy="6" r="1.500" fill="#cfcfcf" /><path d="M6 0v1.500M6 10.500v1.500M0 6h1.500M10.500 6h1.500" />
            </svg>
            <AiOutlineUp size={13} /><AiOutlineDown size={13} /><AiOutlineClose size={13} />
          </FindTools>
          <Button $w={37}>
            <svg width="18" height="18" viewBox="0 0 24 24" fill="none" stroke="#555" strokeWidth="2.200">
              <path d="M9 9h6v6H9zM9 9V5.500A3.300 3.300 0 1 0 5.500 9zM15 9h3.500A3.300 3.300 0 1 0 15 5.500zM9 15H5.500A3.300 3.300 0 1 0 9 18.500zM15 15v3.500a3.300 3.300 0 1 0 3.500-3.500z" />
            </svg>
          </Button>
          <Button $w={153}>Alternate Views <AiOutlineDown size={10} /></Button>
        </TraceHead>

        <Summary>
          <SummaryItem $w={272} $ls={-0.08}>Trace Start <b>August 19 2020, 20:32<i>:26.643</i></b></SummaryItem>
          <SummaryItem $w={101}>Duration <b>1.67s</b></SummaryItem>
          <SummaryItem $w={74}>Services <b>2</b></SummaryItem>
          <SummaryItem $w={59}>Depth <b>4</b></SummaryItem>
          <SummaryItem $w={100} $last>Total Spans <b>4</b></SummaryItem>
        </Summary>

        <MiniMap>
          <MiniTicks><span>0ms</span><span>417.05ms</span><span>834.11ms</span><span>1.25s</span><span>1.67s</span></MiniTicks>
          <svg width="1280" height="61" viewBox="0 0 1280 61" fill="none" shapeRendering="crispEdges">
            <rect x="8.500" y=".5" width="1263" height="59" fill="#fff" stroke="#999" />
            <path d="M9 1h621v5H9zM602 15h5v6h-5z" fill="#4ac6cb" />
            <path d="M1202 30h5v6h-5zM1202 45h69v6h-69z" fill="#f7e1b5" />
            <path d="M324.500 1v58M639.500 1v58M955.500 1v58" stroke="#999" />
            <path d="M9 1v20M1271 1v20" stroke="#555" strokeWidth="3" />
          </svg>
        </MiniMap>

        <HeadRow $h={38}>
          <HeadName>
            Service &amp; Operation
            <HeadTools>
              <AiOutlineDown size={14} />
              <AiOutlineRight size={14} />
              <svg width="14" height="14" viewBox="0 0 14 14" fill="none" stroke="currentColor" strokeWidth="1.100"><path d="m2 1.500 5 5.500 5-5.500M2 6.500 7 12l5-5.500" /></svg>
              <svg width="14" height="14" viewBox="0 0 14 14" fill="none" stroke="currentColor" strokeWidth="1.100"><path d="M1.500 2 7 7l-5.500 5M6.500 2 12 7l-5.500 5" /></svg>
            </HeadTools>
            <Grip />
          </HeadName>
          <Track $bg="#ececec">
            <Tick>0ms</Tick><Tick>417.05ms</Tick><Tick>834.11ms</Tick><Tick><span>1.25s</span><span>1.67s</span></Tick>
          </Track>
        </HeadRow>

        <Row>
          <SpanName depth={1} color={TEAL} service="shipping-service" operation="patch /shipments/{id}/cancelled" />
          <Track><Bar $w={472} $c={TEAL} /><Time>820.86ms</Time></Track>
        </Row>
        <Row>
          <SpanName depth={2} color={TEAL} service="shipping-service" operation="publish" />
          <Track><Mark $x={451} /><Bar $w={1} $c={TEAL} /><Time>0ms</Time></Track>
        </Row>
        <Row>
          <SpanName depth={3} color={SAND} service="commerce-service" operation="next-message" />
          <Track $end><Time $r={5}>0ms</Time><Mark /><Bar $w={2} $c={SAND} /><Bar $w={51} $c="transparent" /></Track>
        </Row>
        <Row>
          <SpanName depth={4} leaf bg="#f0f0f0" color={SAND} service="commerce-service" operation="on-message" />
          <Track $end $line $bg="#f8f8f8"><Time $r={6} $dark>91.83ms</Time><Bar $w={53} $c={SAND} /></Track>
        </Row>
        <Row $h={144}>
          <NameCol $bg="#fff">
            <Guide /><Guide /><Guide /><Guide />
            <Stripe $c={SAND} $m="0" />
            <DetailGap />
          </NameCol>
          <Detail>
            <DetailHead>
              <h2>on-message</h2>
              <Facts>
                <span>Service: <b>commerce-service</b></span>
                <span>Duration: <b>91.83ms</b></span>
                <span>Start Time: <b>1.58s</b></span>
              </Facts>
            </DetailHead>
            <Accordions>
              <Accordion>
                <AiOutlineRight size={11} /><b>Tags:</b><TagKey>component</TagKey><q>=</q>
                <Divider /><TagKey>internal.span.format</TagKey><q>=</q><em>zipkin</em>
              </Accordion>
              <Accordion>
                <AiOutlineRight size={11} /><b>Process:</b><TagKey>ip</TagKey><q>=</q><em>192.168.0.22</em>
              </Accordion>
            </Accordions>
            <SpanId>SpanID: <b>6d624e2415ca8ddf</b><AiOutlineLink size={15} color="#444" /></SpanId>
          </Detail>
        </Row>
        <TableEnd />
      </Window>

      <Dock>
        {renderDock(dockApps)}
        <DockRule />
        {renderDock(dockRunning)}
        <DockRule />
        {renderDock(dockFiles)}
      </Dock>
    </Screen>
  );
}
